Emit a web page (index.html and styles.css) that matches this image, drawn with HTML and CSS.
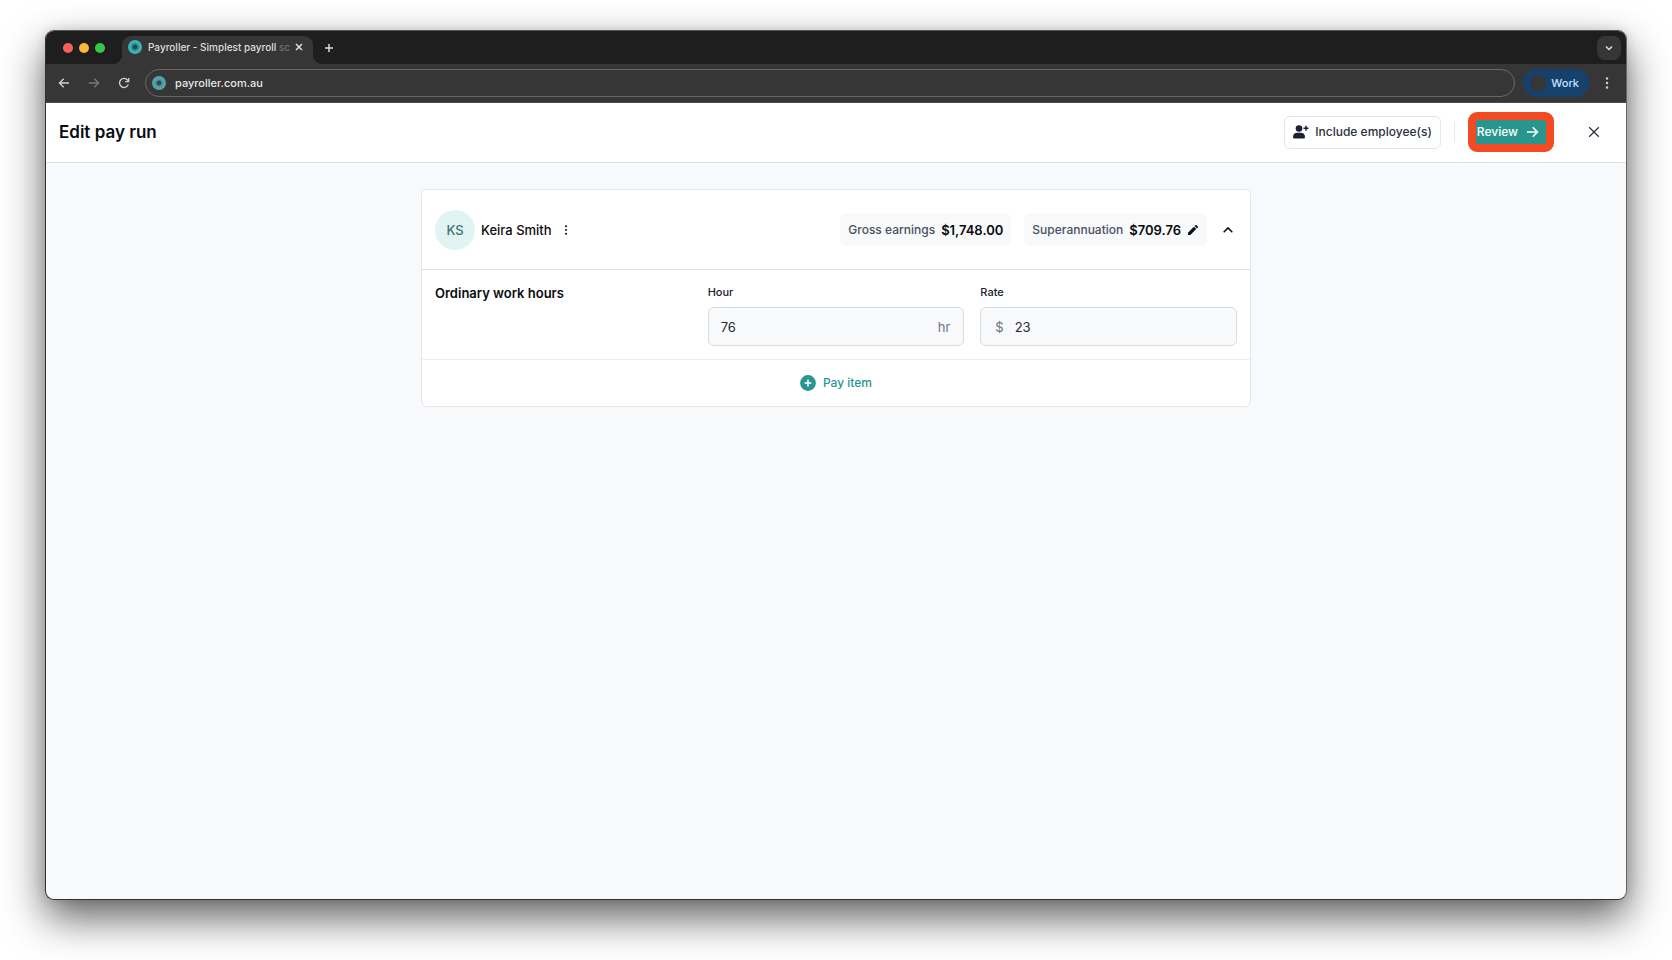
FILE: index.html
```html
<!DOCTYPE html>
<html lang="en">
<head>
<meta charset="utf-8">
<title>Payroller - Edit pay run</title>
<link rel="stylesheet" href="styles.css">
</head>
<body>
<div class="window">
  <div class="tabstrip">
    <div class="lights"><span class="light red"></span><span class="light yellow"></span><span class="light green"></span></div>
    <div class="tab">
      <span class="favicon"></span>
      <span class="tab-title">Payroller - Simplest payroll <span class="fade">sc</span></span>
      <button class="plain tab-close" aria-label="Close tab"><svg width="8" height="8" viewBox="0 0 8 8"><path d="M1 1l6 6M7 1L1 7"/></svg></button>
    </div>
    <button class="plain new-tab" aria-label="New tab"><svg width="10" height="10" viewBox="0 0 10 10"><path d="M5 1v8M1 5h8"/></svg></button>
    <button class="plain tab-search" aria-label="Search tabs"><svg width="8" height="6" viewBox="0 0 8 6"><path d="M1 1.5l3 3 3-3"/></svg></button>
  </div>
  <div class="toolbar">
    <div class="nav">
      <button class="plain" aria-label="Back"><svg width="12" height="12" viewBox="0 0 12 12"><path d="M11 6H1.5M5.700 1.700L1.400 6 5.700 10.300"/></svg></button>
      <button class="plain dim" aria-label="Forward"><svg width="12" height="12" viewBox="0 0 12 12"><path d="M1 6h9.500M6.300 1.700L10.600 6 6.300 10.300"/></svg></button>
      <button class="plain" aria-label="Reload"><svg width="12" height="12" viewBox="0 0 12 12"><path d="M10.300 7.400A4.500 4.500 0 1 1 9.600 3.200L10.600 4.400M10.700 1v3.600H7.100"/></svg></button>
    </div>
    <label class="address"><span class="favicon"></span><input type="text" value="payroller.com.au" aria-label="Address"></label>
    <button class="plain profile"><span class="profile-pic"></span>Work</button>
    <button class="plain menu" aria-label="Menu"><svg width="4" height="12" viewBox="0 0 4 12"><circle cx="2" cy="1.500" r="1.200"/><circle cx="2" cy="6" r="1.200"/><circle cx="2" cy="10.500" r="1.200"/></svg></button>
  </div>
  <header class="page-head">
    <h1>Edit pay run</h1>
    <button class="plain include"><svg width="16" height="14" viewBox="0 0 16 14"><circle cx="6" cy="3.500" r="3.300"/><path d="M0 12.200C0 9 2 7.800 4 7.800h4c2 0 4 1.200 4 4.400 0 .8-.4 1.200-1.200 1.200H1.200C.4 13.400 0 13 0 12.200z"/><path class="cross" d="M13 .8v5M10.500 3.300h5"/></svg>Include employee(s)</button>
    <span class="rule"></span>
    <button class="plain review">Review<svg width="13" height="12" viewBox="0 0 13 12"><path d="M1 6h10.500M6.700 1.200L11.500 6l-4.800 4.800"/></svg></button>
    <button class="plain close" aria-label="Close"><svg width="12" height="12" viewBox="0 0 12 12"><path d="M1.200 1.200l9.600 9.600M10.800 1.200l-9.600 9.600"/></svg></button>
  </header>
  <main>
    <section class="card">
      <div class="employee">
        <span class="avatar">KS</span>
        <h2>Keira Smith</h2>
        <button class="plain more" aria-label="Employee options"><svg width="4" height="10" viewBox="0 0 4 10"><circle cx="2" cy="1.200" r="1"/><circle cx="2" cy="5" r="1"/><circle cx="2" cy="8.800" r="1"/></svg></button>
        <div class="chips">
          <div class="chip">Gross earnings <strong>$1,748.00</strong></div>
          <div class="chip">Superannuation <strong>$709.76</strong><button class="plain edit" aria-label="Edit superannuation"><svg width="10" height="10" viewBox="0 0 10 10"><path d="M0 10V7.700L5.900 1.800 8.200 4.100 2.300 10zM6.600 1.100L7.500.2c.3-.3.7-.3 1 0l1.300 1.300c.3.3.3.7 0 1l-.9.9z"/></svg></button></div>
        </div>
        <button class="plain collapse" aria-label="Collapse"><svg width="12" height="8" viewBox="0 0 12 8"><path d="M1.700 6.200L6 1.900l4.300 4.300"/></svg></button>
      </div>
      <div class="hours">
        <h3>Ordinary work hours</h3>
        <div class="field">
          <label for="hour">Hour</label>
          <div class="box"><input id="hour" type="text" value="76"><span>hr</span></div>
        </div>
        <div class="field">
          <label for="rate">Rate</label>
          <div class="box money"><span>$</span><input id="rate" type="text" value="23"></div>
        </div>
      </div>
      <button class="plain pay-item"><svg width="16" height="16" viewBox="0 0 16 16"><circle cx="8" cy="8" r="7.900"/><path d="M8 4.600v6.800M4.600 8h6.800"/></svg>Pay item</button>
    </section>
  </main>
</div>
</body>
</html>
```
FILE: styles.css
```css
* { box-sizing: border-box; }

body {
  margin: 0;
  min-height: 100vh;
  padding: 30px 45px 60px;
  display: flex;
  background: #fff;
  color: #0a0b10;
  font: 500 12px/16px Inter, "Liberation Sans", sans-serif;
}

h1, h2, h3 { margin: 0; }
svg { display: block; flex: none; fill: none; stroke: currentColor; stroke-width: 1.5; }
input { min-width: 0; padding: 0; border: 0; outline: 0; background: none; color: inherit; font: inherit; }

.plain {
  display: flex;
  align-items: center;
  justify-content: center;
  flex: none;
  padding: 0;
  border: 0;
  background: none;
  color: inherit;
  font: inherit;
}

.window {
  flex: 1;
  display: flex;
  flex-direction: column;
  overflow: hidden;
  border: 1px solid #303030;
  border-top-color: #555;
  border-right-color: #666;
  border-radius: 9px;
  background: #f8f9fb;
  box-shadow: 0 18px 42px rgba(0, 0, 0, .62), 0 0 12px rgba(0, 0, 0, .12);
}

/* Browser tab strip */
.tabstrip {
  display: flex;
  align-items: center;
  height: 33px;
  padding: 0 5px 0 17px;
  background: #1e1e1e;
  color: #dedede;
}
.lights { display: flex; gap: 6px; margin-right: 17px; }
.light { width: 10px; height: 10px; border-radius: 50%; }
.red { background: #fb5f57; }
.yellow { background: #fdb93e; }
.green { background: #34c549; }

.tab {
  position: relative;
  align-self: flex-end;
  display: flex;
  align-items: center;
  width: 191px;
  height: 28px;
  padding: 0 9px 6px 6px;
  border-radius: 9px 9px 0 0;
  background: #363636;
}
.tab::before, .tab::after {
  content: "";
  position: absolute;
  bottom: 0;
  width: 9px;
  height: 9px;
}
.tab::before { right: 100%; background: radial-gradient(circle at 0 0, transparent 9px, #363636 9px); }
.tab::after { left: 100%; background: radial-gradient(circle at 100% 0, transparent 9px, #363636 9px); }

.favicon {
  flex: none;
  width: 14px;
  height: 14px;
  border-radius: 50%;
  background: radial-gradient(circle, #214c52 2px, #2c8f94 3px, #3fb1b5 5px);
}
.tab-title {
  margin: 0 auto 0 6px;
  font-size: 10px;
  white-space: nowrap;
}
.fade { color: #707070; }
.tab-close { width: 10px; height: 16px; }
.new-tab { width: 16px; height: 22px; margin-left: 8px; }
.tab-search {
  width: 24px;
  height: 24px;
  margin-left: auto;
  border-radius: 8px;
  background: #363636;
}

/* Browser toolbar */
.toolbar {
  display: flex;
  align-items: center;
  height: 39px;
  padding: 0 12px;
  border-bottom: 1px solid #4b4b4b;
  background: #363636;
  color: #d2d2d2;
}
.nav { display: flex; gap: 18px; margin-right: 15px; }
.nav svg { stroke-width: 1.3; }
.dim { color: #7a7a7a; }
.address {
  flex: 1;
  display: flex;
  align-items: center;
  gap: 9px;
  height: 28px;
  margin-right: 8px;
  padding: 0 6px;
  border: 1px solid #686868;
  border-radius: 14px;
  color: #e6e6e6;
}
.address input { flex: 1; font-size: 11px; }
.address .favicon { background: radial-gradient(circle, #364a4d 2px, #4a9697 3px, #55a3a5 5px); }
.profile {
  gap: 5px;
  height: 28px;
  padding: 0 10px 0 7px;
  border-radius: 14px;
  background: #17416d;
  color: #c4e2ff;
  font-size: 11px;
}
.profile-pic { width: 16px; height: 16px; border-radius: 50%; background: #363636; }
.menu { width: 14px; margin-left: 11px; }
.menu svg, .more svg, .edit svg { fill: currentColor; stroke: none; }

/* Page header */
.page-head {
  display: flex;
  align-items: center;
  height: 60px;
  padding: 0 25px 1px 13px;
  border-bottom: 1px solid #dfe1e8;
  background: #fff;
}
h1 { margin-right: auto; font-size: 17px; line-height: 24px; font-weight: 600; }
.include {
  gap: 6px;
  height: 33px;
  padding: 0 8px;
  border: 1px solid #e4e5ed;
  border-radius: 6px;
  color: #2c3141;
}
.include svg { fill: #1c2030; stroke: none; }
.include .cross { stroke: #1c2030; }
.rule { width: 1px; height: 20px; margin: 0 13px; background: #e7e8ee; }
.review {
  gap: 8px;
  height: 40px;
  padding: 0 7px 0 1px;
  border: 8px solid #f24a22;
  border-radius: 9px;
  background: #29958f;
  color: #fff;
}
.close { width: 14px; height: 24px; margin-left: 33px; color: #2c3141; }
.close svg { stroke-width: 1.3; }

/* Pay run card */
main { flex: 1; padding: 26px 16px; }
.card {
  max-width: 830px;
  margin: 0 auto;
  border: 1px solid #e4e6eb;
  border-radius: 6px;
  background: #fff;
}
.employee {
  display: flex;
  align-items: center;
  height: 80px;
  padding: 0 16px 0 13px;
  border-bottom: 1px solid #dfe1e5;
}
.avatar {
  width: 40px;
  height: 40px;
  border-radius: 50%;
  background: #e0f5f3;
  color: #3c7473;
  font-size: 13px;
  line-height: 40px;
  text-align: center;
}
h2 { margin: 0 9px 0 6px; font-size: 13px; line-height: 18px; font-weight: 500; }
.more { width: 10px; height: 20px; }
.chips { display: flex; gap: 13px; margin: 0 15px 0 auto; }
.chip {
  display: flex;
  align-items: center;
  gap: 6px;
  height: 33px;
  padding: 0 8px;
  border-radius: 6px;
  background: #f8f9fb;
  color: #4b5060;
}
.chip strong { color: #0a0b10; font-size: 13px; font-weight: 600; }
.edit { width: 12px; height: 16px; color: #0a0b10; }
.collapse { width: 12px; height: 20px; }

.hours {
  display: grid;
  grid-template-columns: repeat(3, 1fr);
  gap: 16px;
  padding: 14px 13px 13px;
  border-bottom: 1px solid #eceef1;
}
h3 { font-size: 13px; line-height: 18px; font-weight: 600; }
.field label { display: block; margin-bottom: 7px; font-size: 11px; line-height: 16px; color: #1c2030; }
.box {
  display: flex;
  align-items: center;
  height: 39px;
  padding: 0 13px 0 12px;
  border: 1px solid #d9dce1;
  border-radius: 6px;
  background: #f8f9fb;
  color: #252936;
  font-size: 13px;
  font-weight: 400;
}
.box input { flex: 1; }
.box span { color: #6c7180; }
.money { gap: 11px; padding-left: 14px; }

.pay-item {
  gap: 7px;
  width: 100%;
  height: 46px;
  color: #29958f;
}
.pay-item circle { fill: #29958f; stroke: none; }
.pay-item path { stroke: #fff; }
```
